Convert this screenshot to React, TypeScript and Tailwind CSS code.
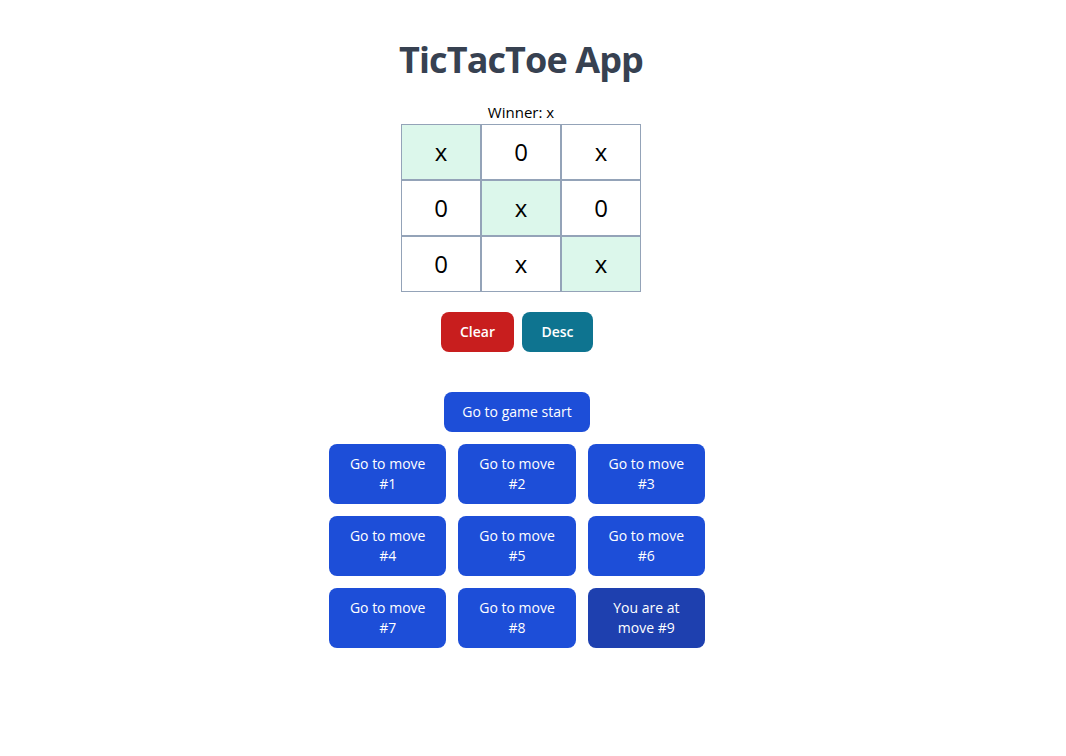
import { useState } from 'react';

type Cell = 'x' | '0' | null;

const FINAL: Cell[] = ['x', '0', 'x', '0', 'x', '0', '0', 'x', 'x'];
const WIN_LINE = [0, 4, 8];

export default function App() {
  const [squares] = useState<Cell[]>(FINAL);
  const moves = Array.from({ length: 10 }, (_, i) => i);

  return (
    <div
      className="min-h-screen bg-white pt-10 pr-[24px] flex flex-col items-center text-black"
      style={{ fontFamily: '"Open Sans", Inter, sans-serif' }}
    >
      <h1 className="text-4xl font-bold text-[#374151] leading-10 tracking-tight">TicTacToe App</h1>

      <p className="mt-5 text-[15px] leading-6">Winner: x</p>

      <div className="grid grid-cols-[80px_80px_80px]">
        {squares.map((v, i) => (
          <button
            key={i}
            className={`h-[56px] border border-[#94a3b8] text-2xl ${WIN_LINE.includes(i) ? 'bg-[#dcf7eb]' : 'bg-white'}`}
          >
            {v}
          </button>
        ))}
      </div>

      <div className="mt-5 mr-[8px] flex gap-2">
        <button className="h-10 w-[73px] rounded-lg bg-[#c81e1e] text-sm font-semibold text-white">Clear</button>
        <button className="h-10 w-[71px] rounded-lg bg-[#0e7490] text-sm font-semibold text-white">Desc</button>
      </div>

      <div className="mt-10 mr-[8px] flex flex-col items-center">
        <button className="rounded-lg bg-[#1d4ed8] px-[18px] py-2.5 text-sm leading-5 font-medium text-white">
          Go to game start
        </button>
        <div className="mt-3 grid w-[376px] grid-cols-3 gap-3">
          {moves.slice(1).map((m) => (
            <button
              key={m}
              className={`rounded-lg px-5 py-2.5 text-sm leading-5 font-medium text-white ${m === 9 ? 'bg-[#1e40af]' : 'bg-[#1d4ed8]'}`}
            >
              {m === 9 ? `You are at move #${m}` : `Go to move #${m}`}
            </button>
          ))}
        </div>
      </div>
    </div>
  );
}
